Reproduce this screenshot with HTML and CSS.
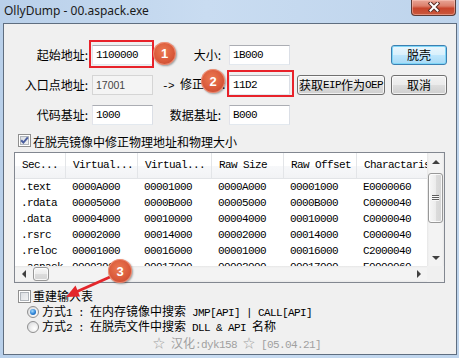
FILE: index.html
```html
<!DOCTYPE html>
<html>
<head>
<meta charset="utf-8">
<title>OllyDump</title>
<link rel="stylesheet" href="styles.css">
</head>
<body>
<div class="window">
  <div class="titlebar">
    <span class="title">OllyDump - 00.aspack.exe</span>
    <div class="close">
      <svg width="12" height="10" viewBox="0 0 12 10"><path d="M2.5 1.5 L9.5 8.5 M9.5 1.5 L2.5 8.5" stroke="#5a2c25" stroke-width="4" stroke-linecap="square" fill="none"/><path d="M2.5 1.5 L9.5 8.5 M9.5 1.5 L2.5 8.5" stroke="#ffffff" stroke-width="2" stroke-linecap="square" fill="none"/></svg>
    </div>
  </div>
  <div class="client">
    <div class="form">
      <span class="lbl">起始地址:</span>
      <div class="input m">1100000</div>
      <span class="lbl lbl2">大小:</span>
      <div class="input m">1B000</div>
      <span></span>
      <div class="btn default">脱壳</div>

      <span class="lbl">入口点地址:</span>
      <div class="input disabled">17001</div>
      <span class="lbl lbl-left"><span class="m">-&gt; </span>修正<span class="m">OEP</span>:</span>
      <div class="input m">11D2</div>
      <div class="btn wide">获取<span class="m">EIP</span>作为<span class="m">OEP</span></div>
      <div class="btn">取消</div>

      <span class="lbl">代码基址:</span>
      <div class="input m">1000</div>
      <span class="lbl lbl2">数据基址:</span>
      <div class="input m">B000</div>
    </div>

    <div class="check check-top">
      <span class="cb"><svg width="11" height="11" viewBox="0 0 11 11"><path d="M2.2 5.2 L4.4 7.6 L8.8 2.4" stroke="#4a5e9e" stroke-width="2" fill="none"/></svg></span>
      <span>在脱壳镜像中修正物理地址和物理大小</span>
    </div>

    <div class="listview">
      <div class="lv-content m">
        <div class="lv-row lv-head"><span>Sec...</span><span>Virtual...</span><span>Virtual...</span><span>Raw Size</span><span>Raw Offset</span><span>Charactaristics</span></div>
        <div class="lv-row"><span>.text</span><span>0000A000</span><span>00001000</span><span>0000A000</span><span>00001000</span><span>E0000060</span></div>
        <div class="lv-row"><span>.rdata</span><span>00005000</span><span>0000B000</span><span>00005000</span><span>0000B000</span><span>C0000040</span></div>
        <div class="lv-row"><span>.data</span><span>00004000</span><span>00010000</span><span>00004000</span><span>00010000</span><span>C0000040</span></div>
        <div class="lv-row"><span>.rsrc</span><span>00002000</span><span>00014000</span><span>00002000</span><span>00014000</span><span>C0000040</span></div>
        <div class="lv-row"><span>.reloc</span><span>00001000</span><span>00016000</span><span>00001000</span><span>00016000</span><span>C2000040</span></div>
        <div class="lv-row"><span>.aspack</span><span>00002000</span><span>00017000</span><span>00002000</span><span>00017000</span><span>E0000060</span></div>
      </div>
      <div class="vscroll">
        <span class="arrow"><i class="tri up"></i></span>
        <span class="vthumb"><i class="grip"></i></span>
        <span class="spacer"></span>
        <span class="arrow"><i class="tri down"></i></span>
      </div>
      <div class="hscroll">
        <span class="harrow"><i class="tri left"></i></span>
        <span class="hthumb"></span>
        <span class="spacer"></span>
        <span class="harrow"><i class="tri right"></i></span>
      </div>
      <div class="corner"></div>
    </div>

    <div class="check check-bottom">
      <span class="cb"></span>
      <span>重建输入表</span>
    </div>
    <div class="radio-row">
      <span class="rb on"><i></i></span>
      <span>方式<span class="m">1 : </span>在内存镜像中搜索<span class="m"> JMP[API] | CALL[API]</span></span>
    </div>
    <div class="radio-row second">
      <span class="rb"></span>
      <span>方式<span class="m">2 : </span>在脱壳文件中搜索<span class="m"> DLL &amp; API </span>名称</span>
    </div>
    <div class="credit">☆<span class="m"> </span>汉化<span class="m">:dyk158 </span>☆<span class="m"> [05.04.21]</span></div>

    <div class="mark mark1"></div>
    <div class="mark mark2"></div>
    <svg class="arrow-note" width="60" height="35" viewBox="0 0 60 35"><line x1="50" y1="7" x2="16" y2="22" stroke="#e3262b" stroke-width="3"/><polygon points="6,27 20,26.5 15.5,15.5" fill="#e3262b"/></svg>
    <div class="badge b1">1</div>
    <div class="badge b2">2</div>
    <div class="badge b3">3</div>
  </div>
</div>
</body>
</html>
```
FILE: styles.css
```css
* { box-sizing: border-box; }
html, body { margin: 0; padding: 0; }
body {
  width: 459px; height: 358px; overflow: hidden;
  font-family: "Noto Sans CJK SC", sans-serif;
  font-size: 12px; color: #000;
}
.m {
  font-family: "Liberation Mono", "Noto Sans CJK SC", monospace;
  font-size: 11px; letter-spacing: -0.6px;
}
.window {
  width: 459px; height: 358px;
  background: linear-gradient(90deg, #b9d0ea, #c9dcf1 45%, #bed4ec);
  padding: 0 2px 3px 3px;
  display: flex; flex-direction: column;
}
.titlebar {
  height: 23px; flex: none;
  display: flex; justify-content: space-between; align-items: flex-start;
}
.title {
  font-family: "Noto Sans", sans-serif; font-size: 12px;
  line-height: 22px; color: #1a1a1a; padding-left: 1px;
}
.close {
  width: 45px; height: 16px; margin-right: 1px;
  border: 1px solid #5b3b36; border-top: none;
  border-radius: 0 0 4px 4px;
  background: linear-gradient(#e8a597 0%, #dc7f6b 40%, #c8452c 55%, #c9583d 100%);
  box-shadow: inset 0 0 0 1px rgba(255,210,200,.45);
  display: flex; justify-content: center; align-items: flex-start; padding-top: 2px;
}
.client {
  flex: 1; position: relative;
  background: #f0f0f0;
  border: 1px solid #5f6e80;
}
.form {
  display: grid;
  grid-template-columns: 88px 61px 76px 61px 95px 62px;
  grid-auto-rows: 20px;
  row-gap: 10px;
  padding-top: 21px;
  align-items: center;
}
.lbl { text-align: right; padding-right: 4px; white-space: nowrap; line-height: 20px; }
.lbl2 { padding-right: 8px; }
.lbl-left { text-align: left; padding-left: 9px; padding-right: 0; overflow: visible; }
.input {
  height: 20px;
  border: 1px solid #abadb3;
  border-color: #abadb3 #dbdfe6 #e3e9ef #e2e3ea;
  background: #fff;
  padding-left: 3px;
  line-height: 18px;
  white-space: nowrap;
}
.input.disabled {
  background: #f4f4f4; border-color: #d5d5d5;
  font-family: "Liberation Sans", sans-serif; font-size: 10.5px; color: #444;
}
.btn {
  justify-self: end;
  width: 56px; height: 20px;
  border: 1px solid #707070; border-radius: 3px;
  background: linear-gradient(#f2f2f2 0%, #ebebeb 48%, #dddddd 52%, #cfcfcf 100%);
  box-shadow: inset 0 0 0 1px rgba(255,255,255,.7);
  display: flex; align-items: center; justify-content: center;
  white-space: nowrap; line-height: 18px;
}
.btn.wide { width: 88px; }
.btn.default {
  border-color: #3c7fb1;
  background: linear-gradient(#eaf6fd 0%, #d9f0fc 48%, #bee6fd 52%, #a7d9f5 100%);
  box-shadow: inset 0 0 0 1px #7fd6f7;
}
.check { display: flex; align-items: flex-start; height: 16px; line-height: 16px; padding-left: 14px; }
.check-top { margin-top: 9px; }
.check-bottom { margin-top: 5px; align-items: center; }
.cb {
  width: 13px; height: 13px; flex: none; margin-right: 2px;
  border: 1px solid #8f8f8f;
  background: linear-gradient(135deg, #d4d8de, #f8f8f8);
  box-shadow: inset 0 0 0 1px #fff, inset 0 0 0 2px #b0b5bb;
  display: flex; align-items: center; justify-content: center;
}
.listview {
  margin: 2px 0 0 10px;
  width: 431px; height: 131px;
  border: 1px solid #828790;
  background: #fff;
  display: grid;
  grid-template-columns: 412px 17px;
  grid-template-rows: 113px 16px;
}
.lv-content { overflow: hidden; }
.lv-row {
  display: grid;
  grid-template-columns: 51px 72px 74px 72px 73px 120px;
  height: 16px; line-height: 16px; white-space: nowrap;
}
.lv-row > span { padding-left: 6px; overflow: hidden; }
.lv-head {
  height: 26px; line-height: 25px;
  border-bottom: 1px solid #e2e4e7;
  background: linear-gradient(#ffffff 0%, #ffffff 50%, #f7f8fa 51%, #f2f3f5 100%);
}
.lv-head > span { border-right: 1px solid #e3e5e8; padding-left: 7px; }
.vscroll {
  grid-row: 1; grid-column: 2;
  background: linear-gradient(90deg, #e6e6e6 0, #f3f3f3 2px, #f3f3f3 15px, #e8e8e8 17px);
  display: flex; flex-direction: column; align-items: center;
}
.arrow { height: 17px; width: 17px; display: flex; align-items: center; justify-content: center; flex: none; }
.vthumb {
  width: 15px; height: 50px; margin-top: 3px; flex: none;
  border: 1px solid #989898; border-radius: 3px;
  background: linear-gradient(90deg, #f7f7f7 0%, #ececec 50%, #dcdcdc 51%, #d4d4d4 100%);
  box-shadow: inset 0 0 0 1px rgba(255,255,255,.8);
  display: flex; align-items: center; justify-content: center;
}
.grip {
  width: 7px; height: 6px;
  background: repeating-linear-gradient(#5e5e5e 0 1px, #f8f8f8 1px 2px);
}
.spacer { flex: 1; }
.hscroll {
  grid-row: 2; grid-column: 1;
  background: linear-gradient(#e6e6e6 0, #f3f3f3 2px, #f3f3f3 14px, #e8e8e8 16px);
  display: flex; align-items: center;
}
.harrow { width: 17px; height: 16px; display: flex; align-items: center; justify-content: center; flex: none; }
.hthumb {
  width: 16px; height: 14px; margin-left: 1px; flex: none;
  border: 1px solid #989898; border-radius: 3px;
  background: linear-gradient(#f7f7f7 0%, #ececec 50%, #dcdcdc 51%, #d4d4d4 100%);
  box-shadow: inset 0 0 0 1px rgba(255,255,255,.8);
}
.corner { grid-row: 2; grid-column: 2; background: #f0f0f0; }
.tri { width: 0; height: 0; display: block; }
.tri.up { border-left: 4px solid transparent; border-right: 4px solid transparent; border-bottom: 4px solid #404040; }
.tri.down { border-left: 4px solid transparent; border-right: 4px solid transparent; border-top: 4px solid #404040; }
.tri.left { border-top: 4px solid transparent; border-bottom: 4px solid transparent; border-right: 4px solid #404040; }
.tri.right { border-top: 4px solid transparent; border-bottom: 4px solid transparent; border-left: 4px solid #404040; }
.radio-row { display: flex; align-items: center; height: 16px; line-height: 16px; padding-left: 23px; }
.radio-row.second { margin-top: -1px; }
.rb {
  width: 12px; height: 12px; flex: none; margin-right: 3px;
  border-radius: 50%; border: 1px solid #8f8f8f;
  background: radial-gradient(circle at 65% 65%, #ffffff 0%, #f0f0f0 40%, #cfd2d6 100%);
  display: flex; align-items: center; justify-content: center;
}
.rb.on i {
  width: 6px; height: 6px; border-radius: 50%; display: block;
  background: radial-gradient(circle at 40% 35%, #a6dcff 0%, #2b82d6 55%, #0f4d96 100%);
}
.credit {
  height: 16px; line-height: 16px;
  padding-left: 149px; color: #a0a0a0;
}
.mark { position: absolute; border: 2px solid #e8222a; }
.mark1 { left: 85px; top: 16px; width: 65px; height: 28px; }
.mark2 { left: 223px; top: 46px; width: 67px; height: 27px; }
.arrow-note { position: absolute; left: 56px; top: 246px; }
.badge {
  position: absolute; width: 23px; height: 23px; border-radius: 50%;
  background: radial-gradient(circle at 45% 40%, #ec7a52 0%, #d9593a 55%, #b9402a 100%);
  box-shadow: 1px 1px 2px rgba(0,0,0,.35), inset 0 0 0 1px rgba(255,190,170,.5);
  color: #fff; font-family: "Liberation Sans", sans-serif; font-weight: bold; font-size: 13px;
  display: flex; align-items: center; justify-content: center;
}
.b1 { left: 149px; top: 18px; }
.b2 { left: 197px; top: 45px; width: 24px; height: 24px; }
.b3 { left: 104px; top: 235px; width: 24px; height: 24px; }
```
